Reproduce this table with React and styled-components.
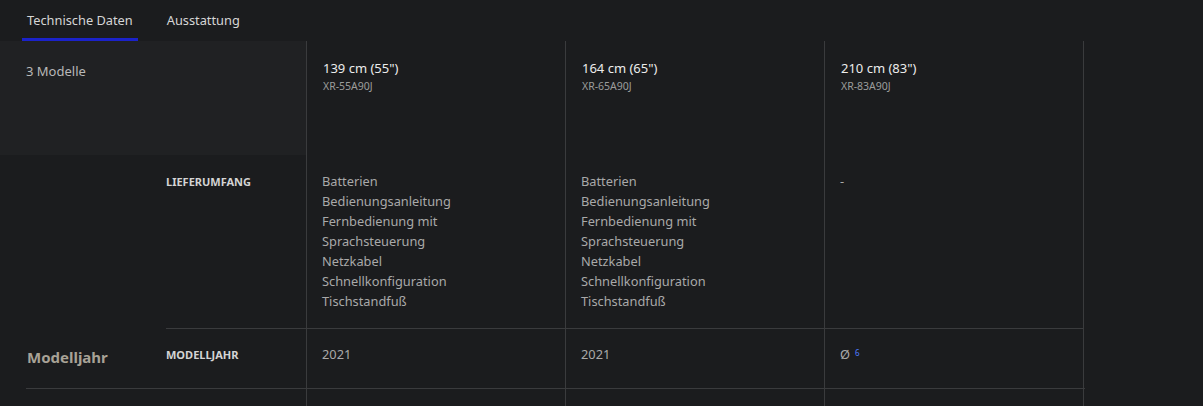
import React from "react";
import styled, { createGlobalStyle } from "styled-components";

const Global = createGlobalStyle`
  html, body { margin: 0; padding: 0; background: #1b1c1e; }
  body { font-family: "Noto Sans", "Open Sans", sans-serif; -webkit-font-smoothing: antialiased; }
`;

const Page = styled.div`
  width: 1203px;
  height: 406px;
  overflow: hidden;
  background: #1b1c1e;
`;

const TabBar = styled.nav`
  display: flex;
  gap: 24px;
  height: 41px;
  padding-left: 22px;
  box-sizing: border-box;
`;

const Tab = styled.button`
  all: unset;
  display: block;
  box-sizing: border-box;
  height: 41px;
  padding: 2px 5px 0;
  font-size: 12.8px;
  line-height: 20px;
  color: #d6d6d6;
  cursor: pointer;
  border-bottom: 3px solid ${(p) => (p.$active ? "#1b22c9" : "transparent")};
`;

const Table = styled.div`
  width: 1085px;
`;

const Row = styled.div`
  display: grid;
  grid-template-columns: 306px 259px 259px 260px;
`;

const Lead = styled.div`
  background: #202123;
  padding: 20px 26px 0;
  font-size: 13px;
  line-height: 20px;
  color: #b8b8b8;
  height: 114px;
  box-sizing: border-box;
`;

const Cell = styled.div`
  border-left: 1px solid #3a3b3d;
  ${(p) => (p.$last ? "border-right: 1px solid #3a3b3d;" : "")}
  padding: 17px 15px 0 16px;
  box-sizing: border-box;
`;

const ModelName = styled.div`
  font-size: 13px;
  line-height: 20px;
  font-weight: 400;
  color: #ececec;
`;

const ModelCode = styled.div`
  margin-top: 1px;
  font-size: 10.5px;
  line-height: 14px;
  color: #9c9c9c;
`;

const Section = styled.div`
  display: grid;
  grid-template-columns: 140px 140px 259px 259px 260px;
  margin-left: 26px;
  ${(p) => (p.$ruled ? "border-bottom: 1px solid #3a3b3d;" : "")}
`;

const SectionTitle = styled.h3`
  margin: 0;
  padding: ${(p) => (p.$empty ? "0" : "17px 0 0 1px")};
  font-size: 15px;
  line-height: 22px;
  font-weight: 700;
  color: #a8a296;
`;

const Label = styled.div`
  padding: ${(p) => p.$pad};
  font-size: 11px;
  line-height: 20px;
  font-weight: 700;
  text-transform: uppercase;
  color: #d4d4d4;
  ${(p) => (p.$ruled ? "border-bottom: 1px solid #3a3b3d;" : "")}
`;

const Value = styled.div`
  border-left: 1px solid #3a3b3d;
  ${(p) => (p.$last ? "border-right: 1px solid #3a3b3d;" : "")}
  ${(p) => (p.$ruled ? "border-bottom: 1px solid #3a3b3d;" : "")}
  padding: ${(p) => p.$pad};
  font-size: 12.8px;
  line-height: 20px;
  color: #a9a9a9;
  box-sizing: border-box;
`;

const Sup = styled.span`
  font-size: 8px;
  line-height: 0;
  color: #4f7cff;
  margin-left: 5px;
  vertical-align: 3px;
`;

const Spacer = styled.div`
  height: 20px;
`;

const models = [
  { name: "139 cm (55\")", code: "XR-55A90J" },
  { name: "164 cm (65\")", code: "XR-65A90J" },
  { name: "210 cm (83\")", code: "XR-83A90J" },
];

const items = [
  "Batterien",
  "Bedienungsanleitung",
  "Fernbedienung mit",
  "Sprachsteuerung",
  "Netzkabel",
  "Schnellkonfiguration",
  "Tischstandfuß",
];

export default function App() {
  return (
    <Page>
      <Global />
      <TabBar>
        <Tab $active>Technische Daten</Tab>
        <Tab>Ausstattung</Tab>
      </TabBar>
      <Table>
        <Row>
          <Lead>3 Modelle</Lead>
          {models.map((m, i) => (
            <Cell key={m.code} $last={i === 2}>
              <ModelName>{m.name}</ModelName>
              <ModelCode>{m.code}</ModelCode>
            </Cell>
          ))}
        </Row>
        <Section>
          <SectionTitle $empty />
          <Label $pad="17px 0 17px" $ruled>Lieferumfang</Label>
          <Value $pad="16px 15px 17px 15px" $ruled>
            {items.map((t) => (
              <div key={t}>{t}</div>
            ))}
          </Value>
          <Value $pad="16px 15px 17px 15px" $ruled>
            {items.map((t) => (
              <div key={t}>{t}</div>
            ))}
          </Value>
          <Value $pad="16px 15px 17px 15px" $ruled $last>-</Value>
        </Section>
        <Section $ruled>
          <SectionTitle>Modelljahr</SectionTitle>
          <Label $pad="16px 0 23px">Modelljahr</Label>
          <Value $pad="15px 15px 24px">2021</Value>
          <Value $pad="15px 15px 24px">2021</Value>
          <Value $pad="15px 15px 24px" $last>
            Ø<Sup>6</Sup>
          </Value>
        </Section>
        <Section>
          <SectionTitle $empty />
          <Spacer />
          <Value $pad="0" />
          <Value $pad="0" />
          <Value $pad="0" $last />
        </Section>
      </Table>
    </Page>
  );
}
